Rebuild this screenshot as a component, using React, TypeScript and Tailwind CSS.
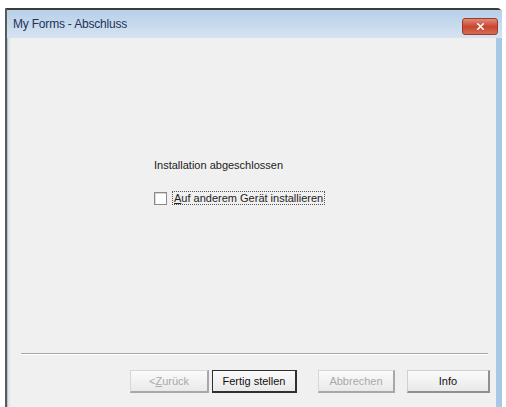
import { X } from 'lucide-react'

type BtnProps = { label: React.ReactNode; width: string; disabled?: boolean; primary?: boolean }

function WizardButton({ label, width, disabled, primary }: BtnProps) {
  return (
    <button
      disabled={disabled}
      className={`${width} h-[23px] flex items-center justify-center text-[11px] bg-gradient-to-b from-[#fbfbfb] to-[#e9e9e9] border-t border-l border-r-2 border-b-2 ${
        primary
          ? 'border-[#2f2f2f] text-[#111]'
          : disabled
            ? 'border-t-[#d6d6d6] border-l-[#d6d6d6] border-r-[#a8a8a8] border-b-[#a8a8a8] text-[#a9a9a9]'
            : 'border-t-[#d0d0d0] border-l-[#d0d0d0] border-r-[#8f8f8f] border-b-[#8f8f8f] text-[#111]'
      }`}
    >
      {label}
    </button>
  )
}

export default function App() {
  return (
    <div className="w-[506px] h-[407px] overflow-hidden bg-white pt-2 pl-[5px] pr-[4px] font-['Liberation_Sans',Arial,sans-serif]">
      <div className="flex h-[399px] flex-col rounded-tr-[5px] border-t-2 border-l-2 border-t-[#3b3b3b] border-l-[#5a5a5a] bg-[#a8c9e5]">

        {/* ── Title bar ── */}
        <div className="h-[28px] flex items-center justify-between pl-[6px] pr-[4px] bg-gradient-to-b from-[#b7cfe8] to-[#d6e4f1]">
          <span className="text-[12px] text-[#22325a] tracking-[-0.2px]">My Forms - Abschluss</span>
          <div className="mt-[4px] w-[36px] h-[17px] rounded-[3px] border border-[#9a3a2a] bg-gradient-to-b from-[#e08a78] via-[#c8452e] to-[#d66a52] flex items-center justify-center">
            <X size={11} strokeWidth={3.5} color="#ffffff" />
          </div>
        </div>

        {/* ── Client area ── */}
        <div className="flex flex-1 flex-col ml-[1px] mr-[6px] border-l-2 border-l-[#e4e4e4] bg-[#f0f0f0]">
          <div className="pt-[121px] pl-[144px] text-[11px] text-[#222]">
            <p className="leading-[13px]">Installation abgeschlossen</p>
            <label className="mt-[19px] flex items-center gap-[5px]">
              <span className="w-[13px] h-[13px] border border-[#8a8a8a] bg-white shadow-[inset_1px_1px_0_#d8d8d8]" />
              <span className="border border-dotted border-[#555] px-[1px] leading-[12px]">
                <span className="underline">A</span>uf anderem Gerät installieren
              </span>
            </label>
          </div>

          <div className="mt-auto ml-[11px] mr-[8px] border-t border-t-[#a9a9a9] border-b border-b-white" />

          <div className="flex justify-end pt-[15px] pb-[14px] pr-[6px]">
            <WizardButton disabled width="w-[79px]" label={<>&lt; <span className="underline">Z</span>urück</>} />
            <div className="ml-[3px]">
              <WizardButton primary width="w-[85px]" label="Fertig stellen" />
            </div>
            <div className="ml-[21px]">
              <WizardButton disabled width="w-[77px]" label="Abbrechen" />
            </div>
            <div className="ml-[12px]">
              <WizardButton width="w-[83px]" label="Info" />
            </div>
          </div>
        </div>
      </div>
    </div>
  )
}
